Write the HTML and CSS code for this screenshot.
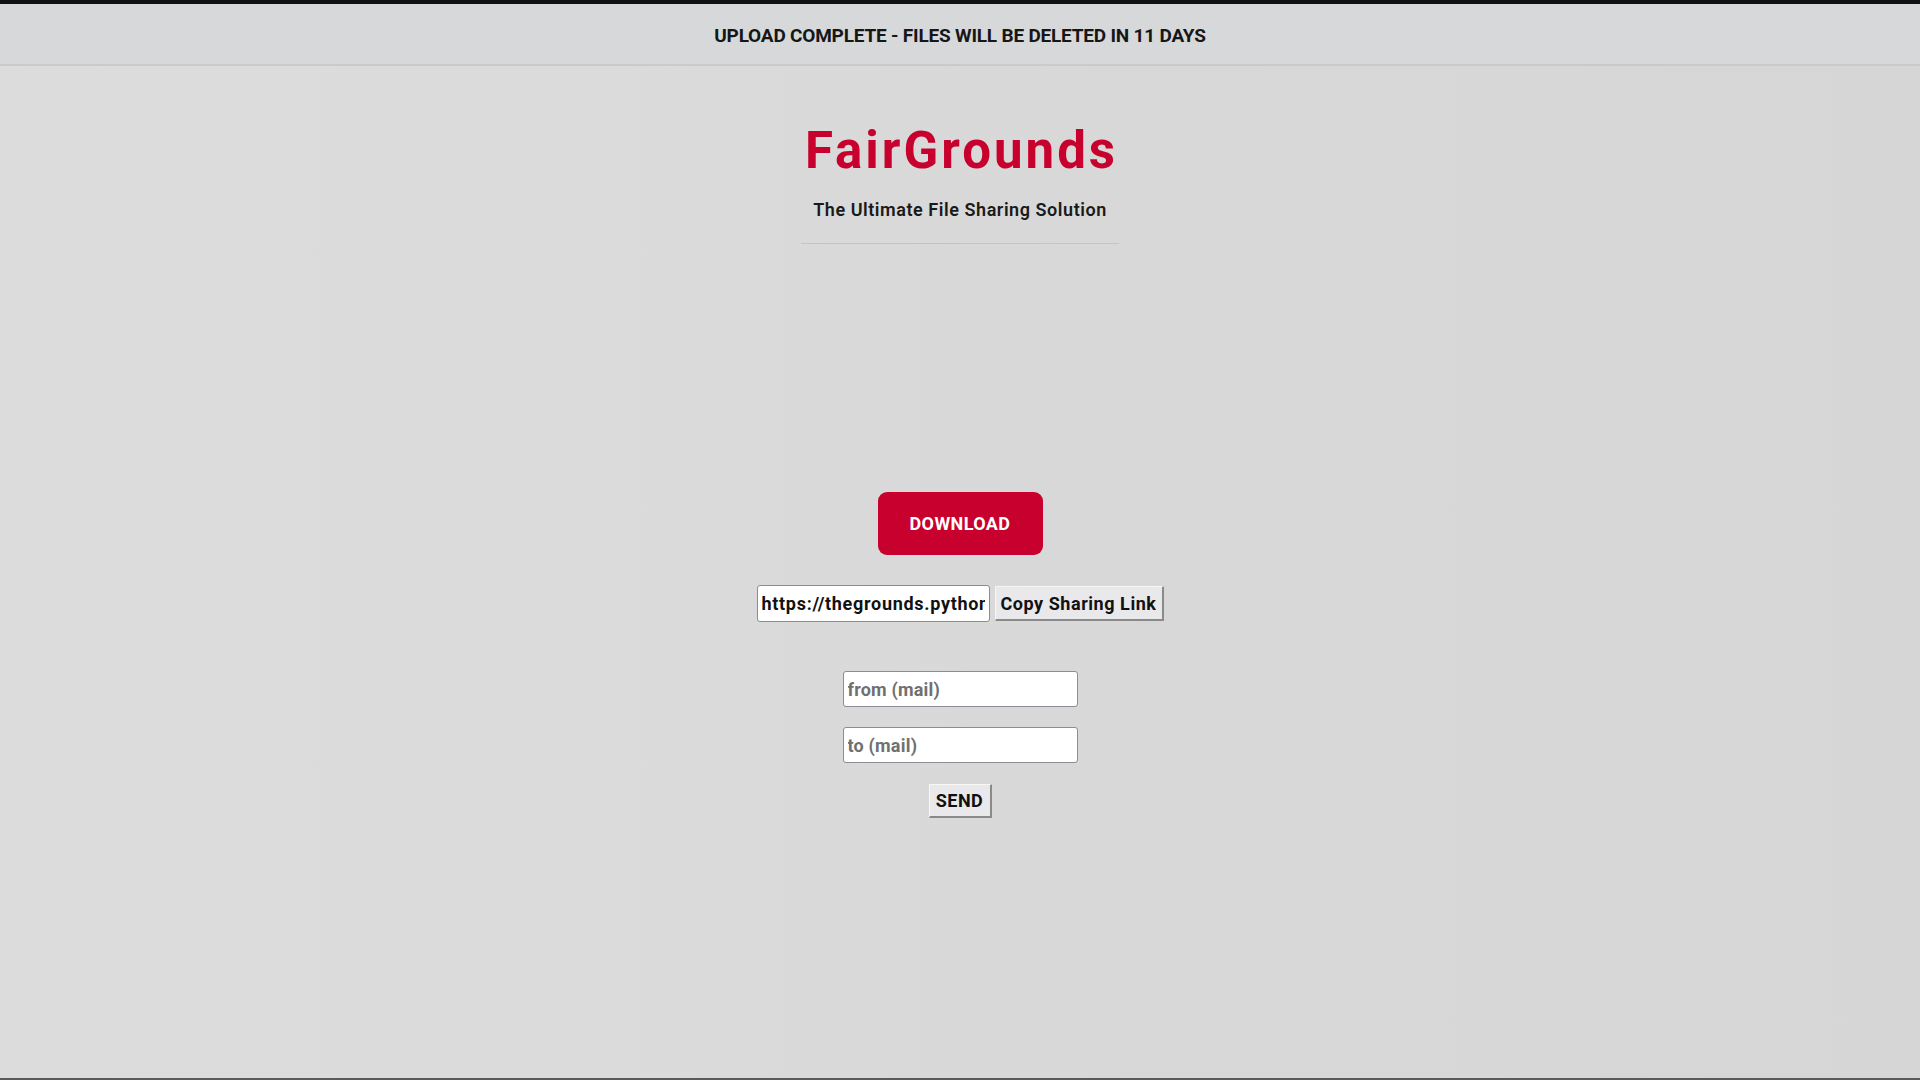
FILE: index.html
```html
<!DOCTYPE html>
<html lang="en">
<head>
<meta charset="utf-8">
<title>FairGrounds</title>
<link rel="stylesheet" href="styles.css">
</head>
<body>
<header class="notice">
  <p class="notice-text">UPLOAD COMPLETE - FILES WILL BE DELETED IN 11 DAYS</p>
</header>
<main class="page">
  <h1 class="brand">FairGrounds</h1>
  <p class="tagline">The Ultimate File Sharing Solution</p>
  <hr class="divider">
  <button class="download" type="button">DOWNLOAD</button>
  <div class="share-row">
    <input class="share-input" type="text" value="https://thegrounds.pythonanywhere.com/download/abc123" readonly>
    <button class="btn copy" type="button">Copy Sharing Link</button>
  </div>
  <form class="mail-form">
    <input class="mail-input" type="text" placeholder="from (mail)">
    <input class="mail-input" type="text" placeholder="to (mail)">
    <button class="btn send" type="button">SEND</button>
  </form>
</main>
</body>
</html>
```

FILE: styles.css
```css
html, body {
  margin: 0;
  padding: 0;
  height: 100%;
}
body {
  font-family: Roboto, "Liberation Sans", sans-serif;
  color: #151515;
  background: linear-gradient(90deg, #dcdcdc 0%, #dbdbdb 30%, #d8d8d8 55%, #d6d6d6 100%);
  border-top: 4px solid #121212;
  border-bottom: 2px solid #5a5a5a;
  box-sizing: border-box;
  min-height: 1080px;
}
.notice {
  background: #d7d8da;
  height: 60px;
  border-bottom: 2px solid #c9cacc;
  display: flex;
  align-items: center;
  justify-content: center;
}
.notice-text {
  margin: 2px 0 0;
  font-size: 19px;
  font-weight: 700;
  letter-spacing: -0.2px;
  color: #161616;
}
.page {
  display: flex;
  flex-direction: column;
  align-items: center;
}
.brand {
  margin: 55px 0 0;
  padding-left: 3px;
  font-size: 51px;
  line-height: 60px;
  font-weight: 700;
  color: #c8002d;
  letter-spacing: 3px;
}
.tagline {
  margin: 17px 0 0;
  font-size: 18px;
  line-height: 24px;
  font-weight: 600;
  color: #1a1a1a;
  letter-spacing: 0.55px;
}
.divider {
  margin: 21px 0 0;
  width: 318px;
  height: 0;
  border: 0;
  border-top: 1px solid #c4c4c4;
}
.download {
  margin-top: 248px;
  width: 165px;
  height: 63px;
  border: 0;
  border-radius: 9px;
  background: #c8002e;
  color: #ffffff;
  font-family: inherit;
  font-size: 18px;
  font-weight: 700;
  letter-spacing: 0.4px;
}
.share-row {
  margin-top: 30px;
  display: flex;
  gap: 5px;
  align-items: center;
}
.share-input {
  width: 233px;
  height: 37px;
  box-sizing: border-box;
  border: 1px solid #8c8c8c;
  border-radius: 3px;
  background: #ffffff;
  padding: 0 4px;
  font-family: inherit;
  font-size: 18px;
  font-weight: 700;
  letter-spacing: 0.7px;
  color: #111;
}
.btn {
  box-sizing: border-box;
  background: #e9e9ec;
  border-top: 1px solid #f6f6f6;
  border-left: 1px solid #f6f6f6;
  border-right: 2px solid #8a8a8a;
  border-bottom: 2px solid #8a8a8a;
  border-radius: 1px;
  font-family: inherit;
  font-size: 18px;
  font-weight: 700;
  color: #111;
  padding: 0 4px;
}
.copy {
  width: 169px;
  height: 35px;
  letter-spacing: 0.55px;
}
.mail-form {
  margin-top: 49px;
  display: flex;
  flex-direction: column;
  align-items: center;
  gap: 20px;
}
.mail-input {
  width: 235px;
  height: 36px;
  box-sizing: border-box;
  border: 1px solid #8c8c94;
  border-radius: 3px;
  background: #ffffff;
  padding: 0 4px;
  font-family: inherit;
  font-size: 18px;
  font-weight: 700;
  letter-spacing: 0.2px;
}
.mail-input::placeholder {
  color: #707070;
}
.send {
  margin-top: 1px;
  width: 63px;
  height: 34px;
  letter-spacing: 0.5px;
}
```
